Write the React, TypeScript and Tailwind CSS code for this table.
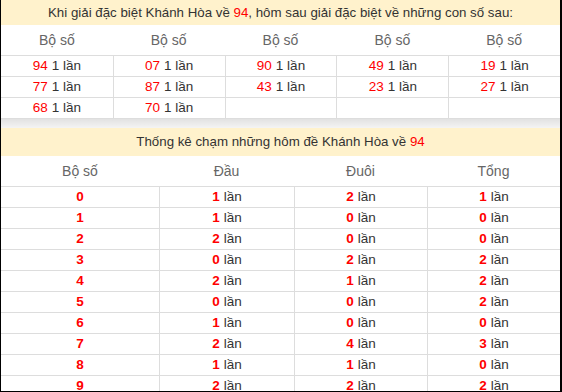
import React from "react";

const pairs = [
  ["94", "07", "90", "49", "19"],
  ["77", "87", "43", "23", "27"],
  ["68", "70", "", "", ""],
];

const stats = [
  ["0", "1", "2", "1"],
  ["1", "1", "0", "0"],
  ["2", "2", "0", "0"],
  ["3", "0", "2", "2"],
  ["4", "2", "1", "2"],
  ["5", "0", "0", "2"],
  ["6", "1", "0", "0"],
  ["7", "2", "4", "3"],
  ["8", "1", "1", "0"],
  ["9", "2", "2", "2"],
];

export default function App() {
  return (
    <div className="w-[562px] h-[392px] overflow-hidden bg-white font-['Liberation_Sans',Arial,sans-serif] border-l border-r-2 border-b border-black">
      <div className="h-[25px] bg-[#fff2cc] flex items-center justify-center text-[13.3px] text-[#333]">
        <span>
          Khi giải đặc biệt Khánh Hòa về <span className="text-[#f00]">94</span>, hôm sau giải đặc biệt về những con số sau:
        </span>
      </div>

      <div className="grid grid-cols-5 h-[30px] items-center text-center text-[14px] text-[#666]">
        {pairs[0].map((_, i) => (
          <div key={i}>Bộ số</div>
        ))}
      </div>
      {pairs.map((row, r) => (
        <div key={r} className="grid grid-cols-5 h-[21px] border-t border-[#ddd] text-[13.5px]">
          {row.map((n, i) => (
            <div
              key={i}
              className={`flex items-center justify-center ${i > 0 ? "border-l border-[#ddd]" : ""}`}
            >
              {n && (
                <>
                  <span className="text-[#f00]">{n}</span>
                  <span className="text-[#333] ml-[4px]">1 lần</span>
                </>
              )}
            </div>
          ))}
        </div>
      ))}
      <div className="h-[10px] border-t border-[#ddd] bg-gradient-to-b from-[#e2e2e2] to-[#f4f4f4]" />

      <div className="h-[28px] bg-[#fff2cc] flex items-center justify-center text-[13.3px] text-[#333]">
        <span>
          Thống kê chạm những hôm đề Khánh Hòa về <span className="text-[#f00]">94</span>
        </span>
      </div>

      <div className="grid grid-cols-[158px_135px_133px_1fr] h-[30px] items-center text-center text-[14px] text-[#666]">
        <div>Bộ số</div>
        <div>Đầu</div>
        <div>Đuôi</div>
        <div>Tổng</div>
      </div>
      {stats.map((row) => (
        <div
          key={row[0]}
          className="grid grid-cols-[158px_135px_133px_1fr] h-[21px] border-t border-[#ddd] text-[13.5px]"
        >
          <div className="flex items-center justify-center font-bold text-[#f00]">{row[0]}</div>
          {row.slice(1).map((v, i) => (
            <div key={i} className="flex items-center justify-center border-l border-[#ddd]">
              <span className="font-bold text-[#f00]">{v}</span>
              <span className="text-[#333] ml-[4px]">lần</span>
            </div>
          ))}
        </div>
      ))}
    </div>
  );
}
